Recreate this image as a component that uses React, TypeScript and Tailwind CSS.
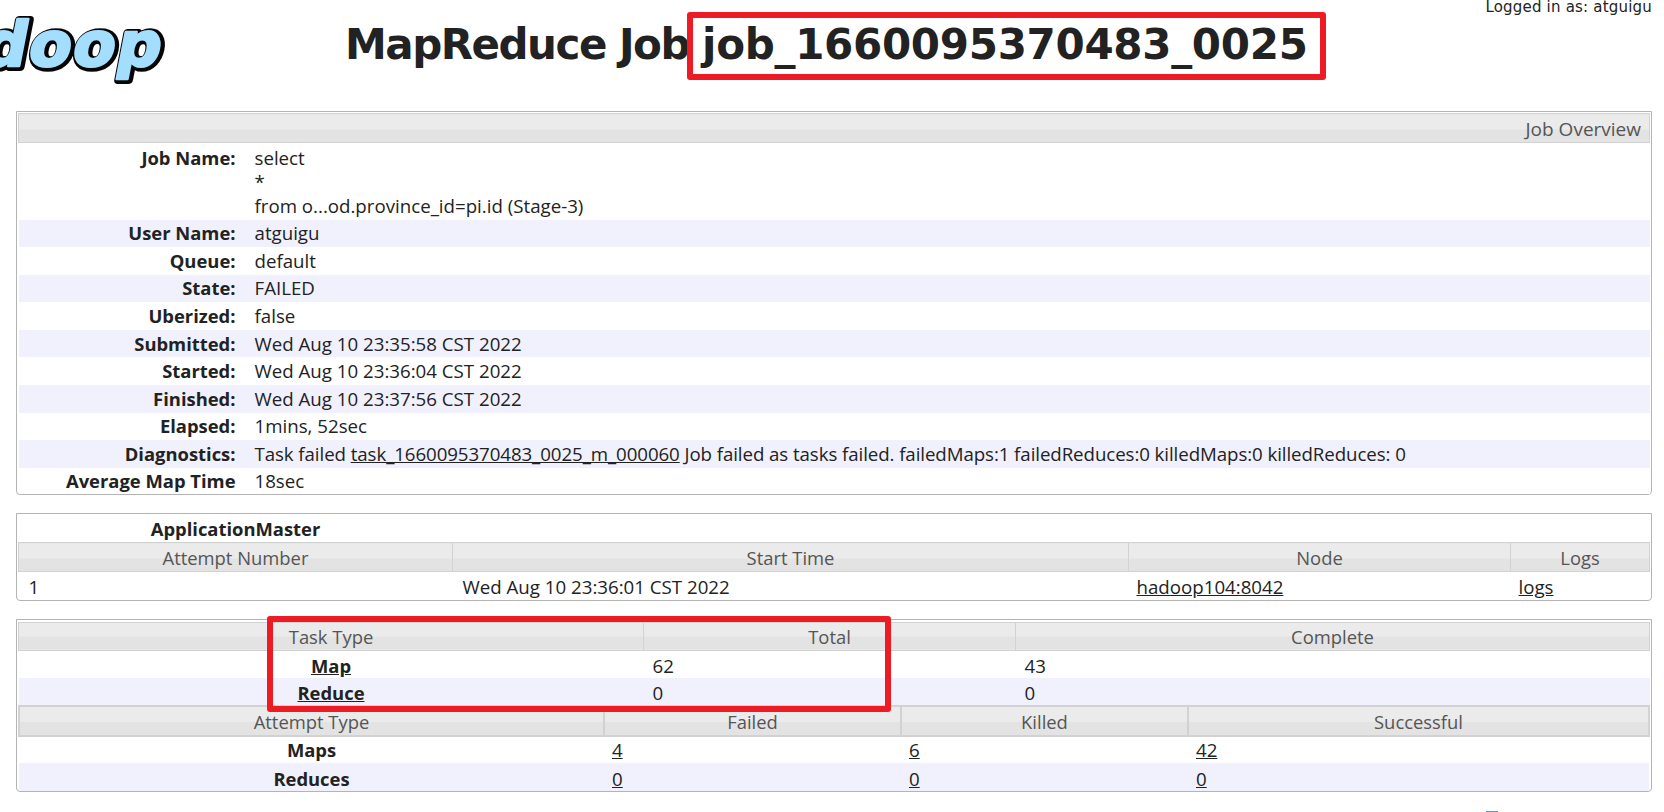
import React from 'react';

const th = 'h-full border border-[#d2d2d2] bg-[linear-gradient(#ebebeb_52%,#e3e3e3_52%)] px-2 pt-[2px] text-center text-[18.4px] font-normal text-[#555555]';
const label = 'text-[18.4px] font-bold';
const odd = 'bg-white';
const even = 'bg-[#f0f1fd]';

const overview: [string, React.ReactNode][] = [
  ['User Name:', 'atguigu'],
  ['Queue:', 'default'],
  ['State:', 'FAILED'],
  ['Uberized:', 'false'],
  ['Submitted:', 'Wed Aug 10 23:35:58 CST 2022'],
  ['Started:', 'Wed Aug 10 23:36:04 CST 2022'],
  ['Finished:', 'Wed Aug 10 23:37:56 CST 2022'],
  ['Elapsed:', '1mins, 52sec'],
  [
    'Diagnostics:',
    <span className="tracking-[-0.08px]">
      Task failed <a className="underline">task_1660095370483_0025_m_000060</a> Job failed as tasks failed. failedMaps:1 failedReduces:0 killedMaps:0 killedReduces: 0
    </span>,
  ],
  ['Average Map Time', '18sec'],
];

function Logo() {
  const text = {
    x: -20,
    y: 0,
    fontFamily: "'DejaVu Sans', sans-serif",
    fontWeight: 700,
    fontSize: 62,
    letterSpacing: 1.5,
    strokeLinejoin: 'round' as const,
  };
  return (
    <svg width="170" height="90" viewBox="0 0 170 90" className="shrink-0">
      <g transform="translate(1.5 67) skewX(-11)">
        <text {...text} fill="#050505" stroke="#050505" strokeWidth="8">doop</text>
      </g>
      <g transform="translate(0 66) skewX(-11)">
        <text {...text} fill="#a3deff" stroke="#a3deff" strokeWidth="2.5">doop</text>
      </g>
    </svg>
  );
}

export default function App() {
  return (
    <div className="relative h-[812px] overflow-hidden bg-white pl-4 pr-3 font-['Open_Sans','Noto_Sans',sans-serif] text-[18.7px] leading-6 text-[#222222]">
      {/* header */}
      <div className="-ml-4 -mr-3 flex h-[111px]">
        <Logo />
        <h1 className="ml-[175px] mt-[19px] whitespace-nowrap font-['DejaVu_Sans',sans-serif] text-[42px] font-bold leading-[52px] text-[#222222]">
          <span className="tracking-[-1.5px]">MapReduce Job</span>
          <span className="ml-[13px] tracking-[-0.3px]">job_1660095370483_0025</span>
        </h1>
        <div className="ml-auto mr-[12px] -mt-[3px] whitespace-nowrap font-['DejaVu_Sans',sans-serif] text-[15px] leading-5 tracking-[0.2px] text-[#222222]">
          Logged in as: atguigu
        </div>
      </div>

      {/* job overview */}
      <div className="rounded-b border border-[#b4b4b4] p-px pb-0">
        <table className="w-full table-fixed border-collapse">
          <colgroup>
            <col className="w-[236px]" />
            <col />
          </colgroup>
          <tbody>
            <tr className="h-[29px]">
              <th colSpan={2} className={`${th} !pr-[8px] !text-right !text-[19px]`}>Job Overview</th>
            </tr>
            <tr className={odd}>
              <th className={`${label} h-[77px] pr-[19px] pt-[3px] text-right align-top`}>Job Name:</th>
              <td className="pt-[3px] align-top">
                select
                <br />*
                <br />from o...od.province_id=pi.id (Stage-3)
              </td>
            </tr>
            {overview.map(([name, value], i) => (
              <tr key={name} className={`${i === 9 ? 'h-[26px]' : 'h-[27.6px]'} ${i % 2 === 0 ? even : odd}`}>
                <th className={`${label} whitespace-nowrap pr-[19px] text-right`}>{name}</th>
                <td className="whitespace-nowrap">{value}</td>
              </tr>
            ))}
          </tbody>
        </table>
      </div>

      {/* application master */}
      <div className="mt-[18px] rounded-b border border-[#b4b4b4] px-px">
        <table className="w-full table-fixed border-collapse">
          <colgroup>
            <col className="w-[434px]" />
            <col className="w-[676px]" />
            <col className="w-[382px]" />
            <col />
          </colgroup>
          <tbody>
            <tr className="h-[29px]">
              <th className={`${label} pt-[2px] text-center`}>ApplicationMaster</th>
              <th colSpan={3} />
            </tr>
            <tr className="h-[29px]">
              <th className={th}>Attempt Number</th>
              <th className={th}>Start Time</th>
              <th className={th}>Node</th>
              <th className={th}>Logs</th>
            </tr>
            <tr className="h-[28px]">
              <td className="pl-[10px] pt-[2px]">1</td>
              <td className="pl-[10px] pt-[2px]">Wed Aug 10 23:36:01 CST 2022</td>
              <td className="pl-[8px] pt-[2px]"><a className="underline">hadoop104:8042</a></td>
              <td className="pl-[8px] pt-[2px]"><a className="underline">logs</a></td>
            </tr>
          </tbody>
        </table>
      </div>

      {/* tasks and attempts */}
      <div className="mt-[18px] rounded-b border border-[#b4b4b4] px-px pb-0 pt-[2px]">
        <table className="w-full table-fixed border-collapse">
          <colgroup>
            <col className="w-[625px]" />
            <col className="w-[372px]" />
            <col />
          </colgroup>
          <tbody>
            <tr className="h-[28px]">
              <th className={th}>Task Type</th>
              <th className={th}>Total</th>
              <th className={th}>Complete</th>
            </tr>
            <tr className={`h-[28px] ${odd}`}>
              <th className={`${label} pt-[2px] text-center`}><a className="underline">Map</a></th>
              <td className="pl-[9px] pt-[2px]">62</td>
              <td className="pl-[9px] pt-[2px]">43</td>
            </tr>
            <tr className={`h-[27px] ${even}`}>
              <th className={`${label} pt-[2px] text-center`}><a className="underline">Reduce</a></th>
              <td className="pl-[9px] pt-[2px]">0</td>
              <td className="pl-[9px] pt-[2px]">0</td>
            </tr>
          </tbody>
        </table>
        <table className="w-full table-fixed border-collapse">
          <colgroup>
            <col className="w-[585px]" />
            <col className="w-[297px]" />
            <col className="w-[287px]" />
            <col />
          </colgroup>
          <tbody>
            <tr className="h-[30px]">
              <th className={`${th} border-2`}>Attempt Type</th>
              <th className={`${th} border-2`}>Failed</th>
              <th className={`${th} border-2`}>Killed</th>
              <th className={`${th} border-2`}>Successful</th>
            </tr>
            <tr className={`h-[27px] ${odd}`}>
              <th className={`${label} text-center`}>Maps</th>
              <td className="pl-[8px]"><a className="underline">4</a></td>
              <td className="pl-[8px]"><a className="underline">6</a></td>
              <td className="pl-[8px]"><a className="underline">42</a></td>
            </tr>
            <tr className={`h-[28px] ${even}`}>
              <th className={`${label} pt-[3px] text-center`}>Reduces</th>
              <td className="pl-[8px] pt-[3px]"><a className="underline">0</a></td>
              <td className="pl-[8px] pt-[3px]"><a className="underline">0</a></td>
              <td className="pl-[8px] pt-[3px]"><a className="underline">0</a></td>
            </tr>
          </tbody>
        </table>
      </div>

      {/* red annotation boxes drawn over the page */}
      <div className="absolute left-[687px] top-[12px] h-[68px] w-[639px] rounded-[3px] border-[6px] border-[#ed1c24]" />
      <div className="absolute left-[267px] top-[616px] h-[96px] w-[624px] rounded-[3px] border-[6px] border-[#ed1c24]" />
      {/* sliver of a blue widget at the bottom edge */}
      <div className="absolute left-[1486px] top-[811px] h-px w-[12px] bg-[#4a9be8]" />
    </div>
  );
}
